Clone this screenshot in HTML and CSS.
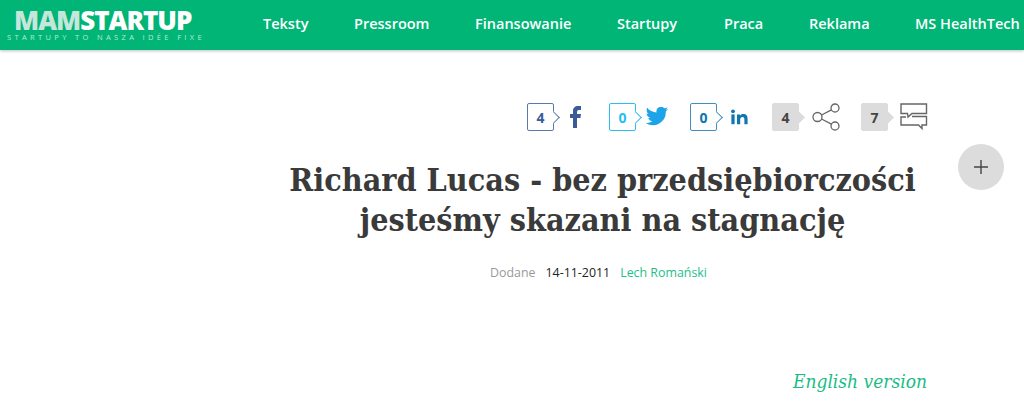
FILE: index.html
```html
<!DOCTYPE html>
<html lang="pl">
<head>
<meta charset="utf-8">
<title>Richard Lucas - bez przedsiębiorczości jesteśmy skazani na stagnację</title>
<link rel="stylesheet" href="styles.css">
</head>
<body>
<header class="topbar">
  <a class="logo" href="#">
    <span class="logo-name"><span class="logo-mam">MAM</span>STARTUP</span>
    <span class="logo-tag">STARTUPY TO NASZA IDÉE FIXE</span>
  </a>
  <nav class="nav">
    <a href="#">Teksty</a>
    <a href="#">Pressroom</a>
    <a href="#">Finansowanie</a>
    <a href="#">Startupy</a>
    <a href="#">Praca</a>
    <a href="#">Reklama</a>
    <a href="#">MS HealthTech</a>
  </nav>
</header>
<main class="article">
  <div class="shares">
    <div class="share share-fb">
      <span class="count">4</span>
      <svg class="icon" width="14" height="24" viewBox="0 0 14 24"><path fill="#3b5a98" d="M4 23V13H1V9h3V6c0-3 2-5 5-5h3v4h-2c-1 0-2 .5-2 2v2h4l-.6 4H8v10z"/></svg>
    </div>
    <div class="share share-tw">
      <span class="count">0</span>
      <svg class="icon" width="24" height="20" viewBox="0 0 24 20"><path fill="#1ca3e8" d="M23 3c-.8.4-1.700.6-2.600.7.900-.6 1.700-1.500 2-2.500-.9.500-1.900.9-2.900 1.100A4.600 4.600 0 0 0 11.600 6.500C7.800 6.300 4.400 4.500 2.200 1.700c-1.200 2-.6 4.700 1.400 6.100-.7 0-1.400-.2-2-.6 0 2.200 1.600 4.200 3.700 4.600-.7.200-1.400.2-2.100.1.600 1.900 2.300 3.200 4.300 3.200A9.300 9.300 0 0 1 .7 17a13 13 0 0 0 20.100-11.600c.9-.6 1.600-1.400 2.200-2.400z"/></svg>
    </div>
    <div class="share share-in">
      <span class="count">0</span>
      <svg class="icon" width="18" height="16" viewBox="0 0 18 16"><g fill="#0e76b0"><circle cx="2" cy="2.300" r="1.900"/><rect x=".4" y="5.400" width="3.200" height="9.800"/><path d="M6 5.400h3v1.400c.6-1 1.800-1.700 3.400-1.700 3 0 4.200 1.900 4.200 4.800v5.300h-3.200v-4.800c0-1.400-.4-2.500-1.800-2.500s-2.400 1-2.400 2.600v4.700H6z"/></g></svg>
    </div>
    <div class="share share-all">
      <span class="count">4</span>
      <svg class="icon" width="29" height="28" viewBox="0 0 29 28"><g fill="none" stroke="#666" stroke-width="1.300"><circle cx="5.500" cy="14" r="4.500"/><circle cx="23" cy="5" r="4"/><circle cx="23" cy="23" r="4"/><path d="M9.500 12 19.500 6.800M9.500 16l10 5.200"/></g></svg>
    </div>
    <div class="share share-comments">
      <span class="count">7</span>
      <svg class="icon" width="28" height="28" viewBox="0 0 28 28"><g fill="none" stroke="#666" stroke-width="1.400"><path d="M1 1h25.500v9.500H12L8 14l-.5-3.500H1z"/><path d="M12 13.500h14.500V22H22v3.500L18.500 22H1v-8h5"/></g></svg>
    </div>
  </div>
  <h1 class="title">Richard Lucas - bez przedsiębiorczości<br>jesteśmy skazani na stagnację</h1>
  <p class="meta">
    <span class="meta-label">Dodane</span>
    <span class="meta-date">14-11-2011</span>
    <a class="meta-author" href="#">Lech Romański</a>
  </p>
  <p class="version"><a href="#">English version</a></p>
  <button class="more" type="button" aria-label="Więcej">
    <svg width="16" height="16" viewBox="0 0 16 16"><path fill="none" stroke="#444" stroke-width="1.400" d="M1 8h14M8 1v14"/></svg>
  </button>
</main>
</body>
</html>
```
FILE: styles.css
```css
* { box-sizing: border-box; }
html, body { margin: 0; padding: 0; }
body {
  width: 1024px;
  height: 410px;
  overflow: hidden;
  background: #fff;
  font-family: "Open Sans", sans-serif;
  color: #333;
}
a { text-decoration: none; color: inherit; }

.topbar {
  height: 50px;
  background: #00b576;
  box-shadow: 0 1px 3px rgba(0,0,0,.25);
  display: flex;
  align-items: flex-start;
  position: relative;
  z-index: 1;
}
.logo {
  width: 263px;
  flex: none;
  padding: 8px 0 0 7px;
  display: flex;
  flex-direction: column;
}
.logo-name {
  font-family: "Open Sans", sans-serif;
  font-weight: 800;
  font-size: 26px;
  line-height: 25px;
  letter-spacing: -1px;
  color: #fff;
  padding-left: 7px;
  white-space: nowrap;
}
.logo-mam { color: #c5e6da; }
.logo-tag {
  font-size: 7.500px;
  line-height: 9px;
  letter-spacing: 3.350px;
  color: #b5ead5;
  white-space: nowrap;
}
.nav {
  display: flex;
  padding-top: 14px;
  font-weight: 600;
  font-size: 14.500px;
  line-height: 20px;
  color: #fff;
  white-space: nowrap;
}
.nav a:nth-child(1) { width: 91px; }
.nav a:nth-child(2) { width: 121px; }
.nav a:nth-child(3) { width: 142px; }
.nav a:nth-child(4) { width: 107px; }
.nav a:nth-child(5) { width: 85px; }
.nav a:nth-child(6) { width: 106px; }

.article { position: relative; height: 360px; }

.shares {
  display: flex;
  padding: 53px 0 0 527px;
  height: 110px;
}
.share { display: flex; align-items: center; height: 28px; }
.share-fb { width: 82px; }
.share-tw { width: 81px; }
.share-in { width: 82px; }
.share-all { width: 89px; }

.count {
  position: relative;
  flex: none;
  width: 27px;
  height: 28px;
  border: 1px solid;
  border-radius: 2px;
  display: flex;
  align-items: center;
  justify-content: center;
  font-weight: 700;
  font-size: 14px;
  background: #fff;
}
.count::after {
  content: "";
  position: absolute;
  right: -5px;
  top: 9px;
  width: 8px;
  height: 8px;
  background: #fff;
  border: solid;
  border-width: 1px 1px 0 0;
  border-color: inherit;
  transform: rotate(45deg);
}
.icon { flex: none; }

.share-fb .count { color: #3b5a98; border-color: #5b79ad; }
.share-fb .icon { margin-left: 15px; }
.share-tw .count { color: #2bbcf2; border-color: #2bbcf2; }
.share-tw .icon { margin-left: 9px; margin-top: -2px; }
.share-in .count { color: #0e76b0; border-color: #3f8fc0; }
.share-in .icon { margin-left: 14px; }
.share-all .count, .share-comments .count {
  background: #dcdcdc;
  border-color: #dcdcdc;
  color: #444;
}
.share-all .count::after, .share-comments .count::after { background: #dcdcdc; }
.share-all .icon { margin-left: 13px; }
.share-comments .icon { margin-left: 12px; }

.title {
  margin: 0;
  margin-left: 279px;
  width: 647px;
  text-align: center;
  font-family: "DejaVu Serif Condensed", "DejaVu Serif", serif;
  font-weight: 700;
  font-size: 32px;
  line-height: 40px;
  color: #3a3a3a;
}
.meta {
  margin: 24px 0 0 275px;
  width: 647px;
  display: flex;
  justify-content: center;
  gap: 10px;
  font-size: 12.400px;
  line-height: 18px;
}
.meta-label { color: #9a9a9a; }
.meta-date { color: #222; }
.meta-author { color: #1cc08a; }
.version {
  margin: 87px 0 0 280px;
  width: 647px;
  text-align: right;
  font-family: "DejaVu Serif Condensed", "DejaVu Serif", serif;
  font-style: italic;
  font-size: 19px;
  line-height: 24px;
  color: #1abc85;
}
.more {
  position: absolute;
  left: 958px;
  top: 94px;
  width: 46px;
  height: 46px;
  padding: 0;
  border: 0;
  border-radius: 50%;
  background: #dcdcdc;
  display: flex;
  align-items: center;
  justify-content: center;
}
```
